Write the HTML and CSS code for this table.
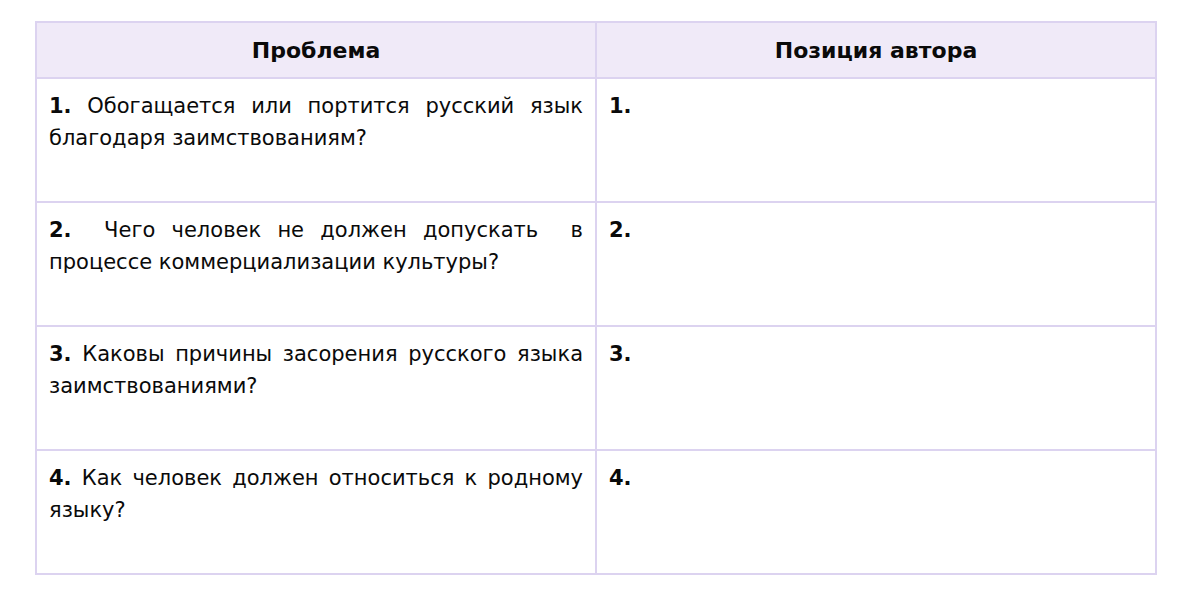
FILE: index.html
```html
<!DOCTYPE html>
<html lang="ru">
<head>
<meta charset="utf-8">
<link rel="stylesheet" href="styles.css">
</head>
<body>
<table class="grid">
  <thead>
    <tr><th>Проблема</th><th>Позиция автора</th></tr>
  </thead>
  <tbody>
    <tr>
      <td><span class="line"><b>1.</b> Обогащается или портится русский язык</span><span class="line">благодаря заимствованиям?</span></td>
      <td><b>1.</b></td>
    </tr>
    <tr>
      <td><span class="line"><b>2.</b>&nbsp; Чего человек не должен допускать&nbsp; в</span><span class="line">процессе коммерциализации культуры?</span></td>
      <td><b>2.</b></td>
    </tr>
    <tr>
      <td><span class="line"><b>3.</b> Каковы причины засорения русского языка</span><span class="line">заимствованиями?</span></td>
      <td><b>3.</b></td>
    </tr>
    <tr>
      <td><span class="line"><b>4.</b> Как человек должен относиться к родному</span><span class="line">языку?</span></td>
      <td><b>4.</b></td>
    </tr>
  </tbody>
</table>
</body>
</html>
```

FILE: styles.css
```css
html, body {
  margin: 0;
  padding: 0;
  background: #ffffff;
}
body {
  padding: 21px 0 0 35px;
  font-family: "DejaVu Sans", "Noto Sans", sans-serif;
  color: #0a0a0a;
}
.grid {
  border-collapse: collapse;
  width: 1122px;
  table-layout: fixed;
}
.grid th, .grid td {
  border: 2px solid #dcd3f0;
  width: 50%;
}
.grid th {
  background: #f0eaf8;
  height: 54px;
  font-size: 22px;
  font-weight: 700;
  text-align: center;
  vertical-align: middle;
  padding: 0;
}
.grid td {
  height: 124px;
  box-sizing: border-box;
  vertical-align: top;
  font-size: 21px;
  line-height: 32px;
  text-align: left;
  padding: 11px 12px 0 12px;
}
.line {
  display: block;
  white-space: nowrap;
}
.line:first-child {
  white-space: normal;
  text-align: justify;
  text-align-last: justify;
}
.grid td b {
  font-weight: 700;
}
```
